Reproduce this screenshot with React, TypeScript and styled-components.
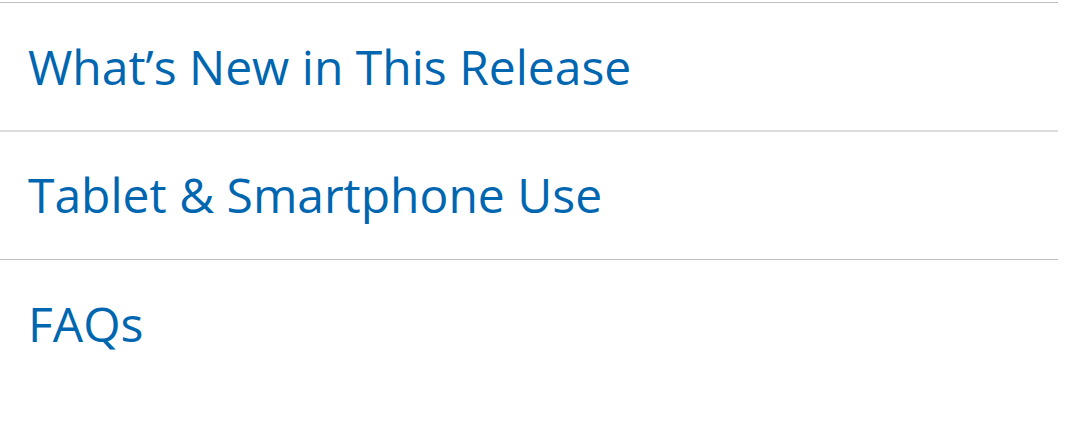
import React from 'react'
import styled, { createGlobalStyle } from 'styled-components'

const GlobalStyle = createGlobalStyle`
  body {
    margin: 0;
    background: #fff;
    font-family: "Open Sans", "Liberation Sans", sans-serif;
  }
`

const StyledMenu = styled.ul`
  list-style: none;
  margin: 0;
  padding: 2px 15px 0 0;
`

const StyledItem = styled.li<{ tone: 'dark' | 'light' }>`
  border-top: ${props => (props.tone === 'light' ? '2px solid #dcdcdc' : '1px solid #bdbdbd')};
  height: ${props => (props.tone === 'light' ? 129 : 128)}px;
  box-sizing: border-box;
  a {
    display: block;
    padding: ${props => (props.tone === 'light' ? 31 : 32)}px 0 0 28px;
    font-size: 48px;
    line-height: 64px;
    color: #0066b0;
    text-decoration: none;
  }
`

const links = [
  { label: 'What’s New in This Release', tone: 'dark' as const },
  { label: 'Tablet & Smartphone Use', tone: 'light' as const },
  { label: 'FAQs', tone: 'dark' as const },
]

const App: React.FC = () => (
  <>
    <GlobalStyle />
    <StyledMenu>
      {links.map(link => (
        <StyledItem key={link.label} tone={link.tone}>
          <a href="#">{link.label}</a>
        </StyledItem>
      ))}
    </StyledMenu>
  </>
)

export default App
